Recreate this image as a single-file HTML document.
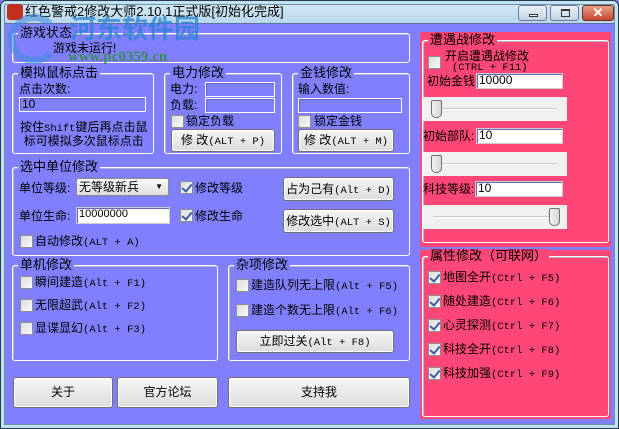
<!DOCTYPE html>
<html><head><meta charset="utf-8"><style>
*{box-sizing:border-box;margin:0;padding:0}
body{width:619px;height:429px;overflow:hidden;background:#8080ff;font-family:"Liberation Sans","Noto Sans CJK SC",sans-serif;font-size:12px;color:#000;position:relative}
.a{position:absolute;white-space:nowrap;line-height:14px}
.win{position:absolute;left:0;top:0;width:619px;height:429px;border:1px solid #2a3a4a;border-radius:6px 6px 0 0;box-shadow:inset 0 0 0 3px #bfe3f2, inset 0 0 0 4px #7090a8}
.title{position:absolute;left:1px;top:1px;width:617px;height:22px;background:linear-gradient(#d6eaf6,#b9d8ec);border-radius:5px 5px 0 0}
.body{position:absolute;left:4px;top:23px;width:611px;height:403px;background:#8080ff;border:1px solid #6070a0}
.gb{position:absolute;border:1px solid #fff;border-radius:3px;box-shadow:inset 1px 1px 0 #b0b0d0}
.gt{position:absolute;top:-8px;left:5px;background:#8080ff;padding:0 2px;line-height:14px;font-size:13px}
.pk .gt{background:#ff4777}
.in{position:absolute;background:#8080ff;border:1px solid #fff;box-shadow:inset 1px 1px 0 #6666bb;height:15px;font-size:12px;line-height:13px;padding-left:2px}
.in.w{background:#fff;border:1px solid #ccc}
.btn{position:absolute;background:linear-gradient(#f6f6f6,#dcdcdc);border:1px solid #707070;border-radius:3px;text-align:center;font-size:12px;box-shadow:inset 0 0 0 1px #fff}
.m{font-family:"Liberation Mono",monospace;font-size:10.5px}
.cb{position:absolute;width:13px;height:13px;border:1px solid #8f8f8f;background:linear-gradient(135deg,#dcdcdc,#fafafa)}
.cb.c::after{content:"";position:absolute;left:3px;top:0px;width:4px;height:8px;border:solid #3b5ba5;border-width:0 2px 2px 0;transform:rotate(40deg)}
.pk{position:absolute;background:#ff4777}
.sl{position:absolute;background:#f0f0f0}
.sl i{position:absolute;left:10px;right:10px;top:11px;height:2px;background:#c8c8c8;border-bottom:1px solid #fff}
.sl b{position:absolute;top:3px;width:11px;height:18px;background:linear-gradient(90deg,#f2f2f2,#d6d6d6);border:1px solid #707070;border-radius:2px 2px 5px 5px}
</style></head><body>
<div class="title"></div>
<div class="body"></div>
<div class="win"></div>
<div class="a" style="left:7px;top:4px;width:16px;height:16px;border-radius:3px;background:#c03020"></div>
<div class="a" style="left:25px;top:5px;font-size:13px">红色警戒2修改大师2.10.1正式版[初始化完成]</div>
<div class="a" style="left:518px;top:5px;width:29px;height:16px;border:1px solid #6a7d92;border-radius:3px;background:linear-gradient(#e9f1f8,#c3d4e6)"><div style="position:absolute;left:10px;top:8px;width:9px;height:3px;border:1px solid #333;background:#fff"></div></div>
<div class="a" style="left:550px;top:5px;width:29px;height:16px;border:1px solid #6a7d92;border-radius:3px;background:linear-gradient(#e9f1f8,#c3d4e6)"><div style="position:absolute;left:10px;top:3px;width:9px;height:8px;border:1px solid #333;border-top-width:2px"></div></div>
<div class="a" style="left:582px;top:5px;width:32px;height:16px;border:1px solid #6a3020;border-radius:3px;background:linear-gradient(#e8a090,#c8452c);color:#fff;text-align:center;font-weight:bold;font-size:13px;line-height:14px">✕</div>

<!-- 游戏状态 -->
<div class="gb" style="left:12px;top:33px;width:398px;height:30px"><span class="gt">游戏状态</span></div>
<div class="a" style="left:53px;top:41px">游戏未运行!</div>
<div class="a" style="left:8px;top:14px;width:52px;height:50px;border-radius:50%;border:7px solid rgba(60,140,220,.55);border-right-color:transparent"></div>
<div class="a" style="left:70px;top:14px;font-size:26px;font-weight:bold;color:rgba(40,130,210,.75);line-height:30px">河东软件园</div>
<div class="a" style="left:68px;top:50px;font-size:15px;font-weight:bold;color:rgba(40,140,40,.8);font-family:'Liberation Serif',serif">www.pc0359.cn</div>

<!-- 模拟鼠标点击 -->
<div class="gb" style="left:12px;top:73px;width:142px;height:81px"><span class="gt">模拟鼠标点击</span></div>
<div class="a" style="left:19px;top:82px">点击次数:</div>
<div class="in" style="left:19px;top:97px;width:127px">10</div>
<div class="a" style="left:20px;top:121px;line-height:12px;text-align:center">按住<span class="m">Shift</span>键后再点击鼠<br>标可模拟多次鼠标点击</div>

<!-- 电力 -->
<div class="gb" style="left:164px;top:73px;width:118px;height:81px"><span class="gt">电力修改</span></div>
<div class="a" style="left:170px;top:82px">电力:</div>
<div class="in" style="left:205px;top:82px;width:70px"></div>
<div class="a" style="left:170px;top:98px">负载:</div>
<div class="in" style="left:205px;top:98px;width:70px"></div>
<div class="cb" style="left:171px;top:115px"></div>
<div class="a" style="left:186px;top:114px">锁定负载</div>
<div class="btn" style="left:171px;top:129px;width:104px;height:23px;line-height:21px">修 改<span class="m">(ALT + P)</span></div>

<!-- 金钱 -->
<div class="gb" style="left:292px;top:73px;width:118px;height:81px"><span class="gt">金钱修改</span></div>
<div class="a" style="left:298px;top:82px">输入数值:</div>
<div class="in" style="left:298px;top:98px;width:104px"></div>
<div class="cb" style="left:298px;top:115px"></div>
<div class="a" style="left:314px;top:114px">锁定金钱</div>
<div class="btn" style="left:298px;top:129px;width:96px;height:23px;line-height:21px">修 改<span class="m">(ALT + M)</span></div>

<!-- 选中单位 -->
<div class="gb" style="left:12px;top:167px;width:398px;height:89px"><span class="gt">选中单位修改</span></div>
<div class="a" style="left:19px;top:181px">单位等级:</div>
<div class="a" style="left:76px;top:178px;width:93px;height:18px;background:linear-gradient(#fafafa,#dedede);border:1px solid #8a8a8a;border-radius:2px;padding-left:2px;line-height:16px">无等级新兵<span style="position:absolute;right:5px;font-size:8px">▼</span></div>
<div class="cb c" style="left:180px;top:181px"></div>
<div class="a" style="left:195px;top:181px">修改等级</div>
<div class="btn" style="left:283px;top:177px;width:111px;height:24px;line-height:22px">占为己有<span class="m">(Alt + D)</span></div>
<div class="a" style="left:19px;top:209px">单位生命:</div>
<div class="in w" style="left:76px;top:207px;width:94px;height:17px;font-size:11px">10000000</div>
<div class="cb c" style="left:180px;top:209px"></div>
<div class="a" style="left:195px;top:209px">修改生命</div>
<div class="btn" style="left:283px;top:209px;width:111px;height:24px;line-height:22px">修改选中<span class="m">(ALT + S)</span></div>
<div class="cb" style="left:20px;top:235px"></div>
<div class="a" style="left:35px;top:234px">自动修改<span class="m">(ALT + A)</span></div>

<!-- 单机 -->
<div class="gb" style="left:12px;top:265px;width:206px;height:96px"><span class="gt">单机修改</span></div>
<div class="cb" style="left:20px;top:276px"></div><div class="a" style="left:35px;top:275px">瞬间建造<span class="m">(Alt + F1)</span></div>
<div class="cb" style="left:20px;top:299px"></div><div class="a" style="left:35px;top:298px">无限超武<span class="m">(Alt + F2)</span></div>
<div class="cb" style="left:20px;top:322px"></div><div class="a" style="left:35px;top:321px">显谍显幻<span class="m">(Alt + F3)</span></div>

<!-- 杂项 -->
<div class="gb" style="left:228px;top:265px;width:182px;height:96px"><span class="gt">杂项修改</span></div>
<div class="cb" style="left:236px;top:279px"></div><div class="a" style="left:251px;top:278px">建造队列无上限<span class="m">(Alt + F5)</span></div>
<div class="cb" style="left:236px;top:304px"></div><div class="a" style="left:251px;top:303px">建造个数无上限<span class="m">(Alt + F6)</span></div>
<div class="btn" style="left:236px;top:330px;width:158px;height:23px;line-height:21px">立即过关<span class="m">(Alt + F8)</span></div>

<!-- bottom buttons -->
<div class="btn" style="left:13px;top:377px;width:100px;height:31px;line-height:29px">关于</div>
<div class="btn" style="left:117px;top:377px;width:101px;height:31px;line-height:29px">官方论坛</div>
<div class="btn" style="left:228px;top:377px;width:182px;height:31px;line-height:29px">支持我</div>

<!-- right pink 1 -->
<div class="pk" style="left:420px;top:32px;width:191px;height:215px"></div>
<div class="gb pk" style="left:422px;top:40px;width:187px;height:203px;background:none;border-color:#fff"><span class="gt">遭遇战修改</span></div>
<div class="cb" style="left:428px;top:56px"></div>
<div class="a" style="left:445px;top:49px">开启遭遇战修改</div>
<div class="a m" style="left:452px;top:63px;line-height:11px">(CTRL + F11)</div>
<div class="a" style="left:427px;top:74px">初始金钱</div>
<div class="in w" style="left:476px;top:73px;width:87px;height:16px">10000</div>
<div class="sl" style="left:423px;top:97px;width:144px;height:24px"><i></i><b style="left:8px"></b></div>
<div class="a" style="left:423px;top:129px">初始部队:</div>
<div class="in w" style="left:476px;top:128px;width:87px;height:16px">10</div>
<div class="sl" style="left:423px;top:152px;width:144px;height:24px"><i></i><b style="left:8px"></b></div>
<div class="a" style="left:423px;top:182px">科技等级:</div>
<div class="in w" style="left:475px;top:181px;width:88px;height:16px">10</div>
<div class="sl" style="left:423px;top:205px;width:144px;height:24px"><i></i><b style="left:126px"></b></div>

<!-- right pink 2 -->
<div class="pk" style="left:420px;top:250px;width:191px;height:169px"></div>
<div class="gb pk" style="left:422px;top:256px;width:187px;height:161px;background:none;border-color:#fff"><span class="gt">属性修改（可联网）</span></div>
<div class="cb c" style="left:428px;top:271px"></div><div class="a" style="left:443px;top:270px">地图全开<span class="m">(Ctrl + F5)</span></div>
<div class="cb c" style="left:428px;top:295px"></div><div class="a" style="left:443px;top:294px">随处建造<span class="m">(Ctrl + F6)</span></div>
<div class="cb c" style="left:428px;top:319px"></div><div class="a" style="left:443px;top:318px">心灵探测<span class="m">(Ctrl + F7)</span></div>
<div class="cb c" style="left:428px;top:343px"></div><div class="a" style="left:443px;top:342px">科技全开<span class="m">(Ctrl + F8)</span></div>
<div class="cb c" style="left:428px;top:367px"></div><div class="a" style="left:443px;top:366px">科技加强<span class="m">(Ctrl + F9)</span></div>
</body></html>
